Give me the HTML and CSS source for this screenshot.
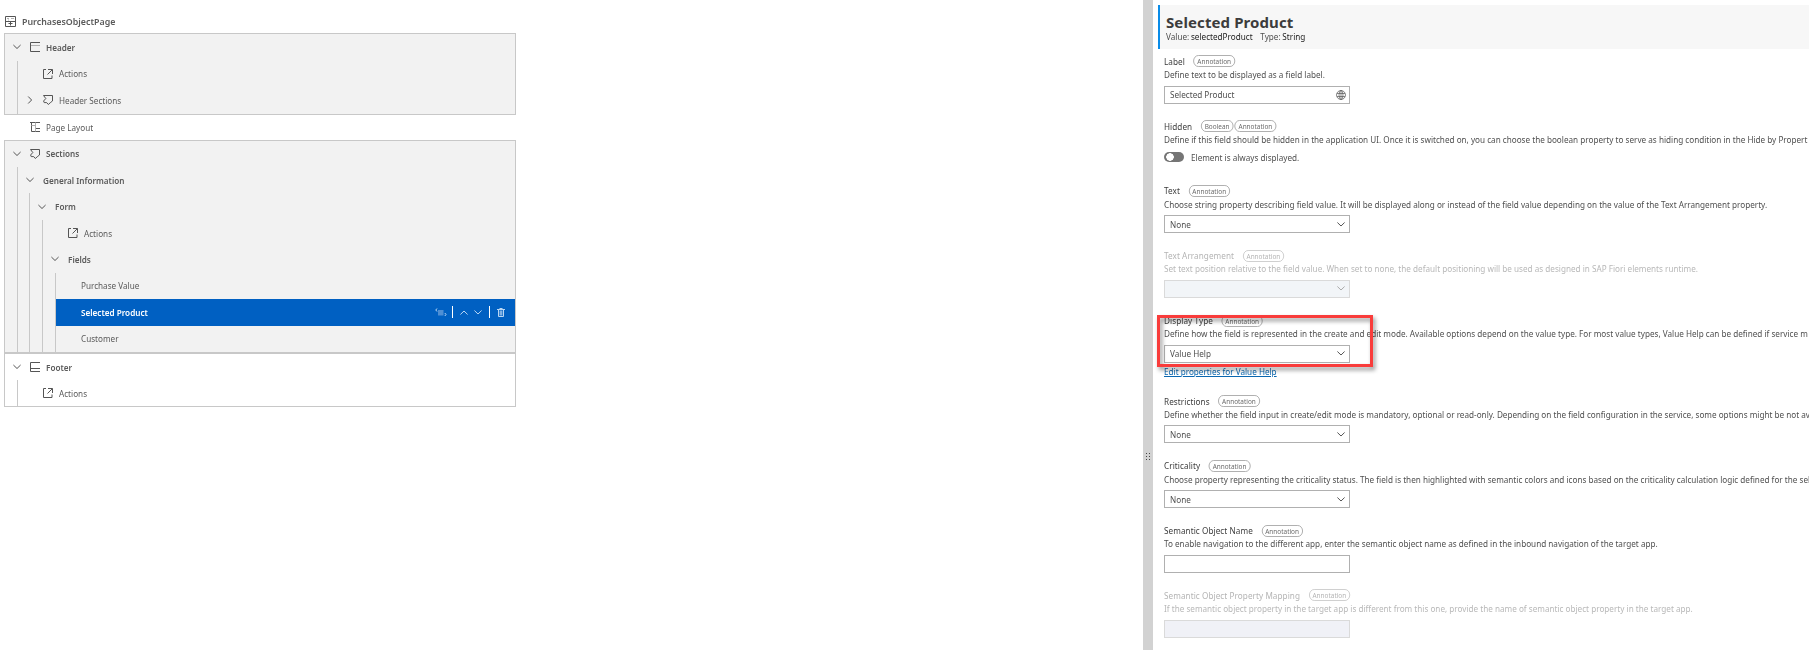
FILE: index.html
```html
<!DOCTYPE html>
<html lang="en">
<head>
<meta charset="utf-8">
<title>PurchasesObjectPage</title>
<link rel="stylesheet" href="styles.css">
</head>
<body>
<svg class="defs" aria-hidden="true">
  <symbol id="down" viewBox="0 0 8 5"><path d="M.4.5 4 4 7.6.5"/></symbol>
  <symbol id="right" viewBox="0 0 5 8"><path d="M.7.5 4.1 4 .7 7.5"/></symbol>
  <symbol id="action" viewBox="0 0 10 10"><path d="M3 .5H.5v9h8.500V6.500M5 .5h4.500v4.500M9.300.7 4.500 5.500"/></symbol>
  <symbol id="section" viewBox="0 0 10 10"><path d="M.5.5h9v5.500L7.800 7.300 5.300 9.500 3.700 7.600H1.200L.6 6 2.800 3.500z"/></symbol>
  <symbol id="header" viewBox="0 0 10 10"><path d="M10 .5H.5v9H10"/><path class="faint" d="M1 3.500H10"/></symbol>
  <symbol id="footer" viewBox="0 0 10 10"><path d="M10 .5H.5v9H10M.5 6.500H10"/></symbol>
  <symbol id="layout" viewBox="0 0 10 10"><path d="M0 .5h10M1.500.5v9H10M5.500 6.500H10"/><path class="faint" d="M5.500.5v9M1.500 3.500h4"/></symbol>
</svg>
<div class="app">
  <main class="outline">
    <div class="page-title">
      <svg class="page-icon" viewBox="0 0 11 11"><path d="M.5.5h10v10H.5zM.5 5.500h10M5.500 5.500v4M3.500 7.500h4"/><path class="faint" d="M2 2.500h2M6 2.500h3M3 4h1"/></svg>
      <span>PurchasesObjectPage</span>
    </div>

    <section class="box shaded">
      <div class="row bold"><svg class="chev"><use href="#down"/></svg><svg class="icon"><use href="#header"/></svg><span>Header</span></div>
      <div class="children">
        <div class="row"><i class="chev"></i><svg class="icon"><use href="#action"/></svg><span>Actions</span></div>
        <div class="row"><svg class="chev"><use href="#right"/></svg><svg class="icon"><use href="#section"/></svg><span>Header Sections</span></div>
      </div>
    </section>

    <div class="row single"><i class="chev"></i><svg class="icon"><use href="#layout"/></svg><span>Page Layout</span></div>

    <section class="box shaded">
      <div class="row bold"><svg class="chev"><use href="#down"/></svg><svg class="icon"><use href="#section"/></svg><span>Sections</span></div>
      <div class="children">
        <div class="row bold"><svg class="chev"><use href="#down"/></svg><span>General Information</span></div>
        <div class="children">
          <div class="row bold"><svg class="chev"><use href="#down"/></svg><span>Form</span></div>
          <div class="children">
            <div class="row"><i class="chev"></i><svg class="icon"><use href="#action"/></svg><span>Actions</span></div>
            <div class="row bold"><svg class="chev"><use href="#down"/></svg><span>Fields</span></div>
            <div class="children">
              <div class="row"><i class="chev"></i><span>Purchase Value</span></div>
              <div class="row bold selected"><i class="chev"></i><span>Selected Product</span>
                <div class="tools">
                  <svg class="move" viewBox="0 0 12 9"><path d="M2 .5.8 2 2 3.500M9.800 5l1.200 1.500L9.800 8"/><path class="fill" d="M3 2h5.500v5.500H3z"/></svg>
                  <i class="bar"></i>
                  <svg class="up" viewBox="0 0 8 5"><path d="M.4 4.500 4 1l3.600 3.500"/></svg>
                  <svg class="dn" viewBox="0 0 8 5"><path d="M.4.5 4 4 7.600.5"/></svg>
                  <i class="bar"></i>
                  <svg class="trash" viewBox="0 0 8 9"><path d="M0 1.500h8M2.500.5h3M1.500 2v6.500h5V2M3.200 2.500v5M4.800 2.500v5"/></svg>
                </div>
              </div>
              <div class="row"><i class="chev"></i><span>Customer</span></div>
            </div>
          </div>
        </div>
      </div>
    </section>

    <section class="box last">
      <div class="row bold"><svg class="chev"><use href="#down"/></svg><svg class="icon"><use href="#footer"/></svg><span>Footer</span></div>
      <div class="children">
        <div class="row"><i class="chev"></i><svg class="icon"><use href="#action"/></svg><span>Actions</span></div>
      </div>
    </section>
  </main>

  <div class="splitter"><div class="grip"><i></i><i></i><i></i><i></i><i></i><i></i></div></div>

  <aside class="panel">
    <header class="panel-head">
      <h1>Selected Product</h1>
      <p><span>Value:</span><b>selectedProduct</b><span class="type">Type:</span><b>String</b></p>
    </header>
    <div class="fields">
      <div class="field">
        <div class="label"><span>Label</span><em>Annotation</em></div>
        <p class="desc">Define text to be displayed as a field label.</p>
        <div class="control"><span>Selected Product</span><svg class="globe" viewBox="0 0 10 10"><circle cx="5" cy="5" r="4.500"/><ellipse cx="5" cy="5" rx="2" ry="4.500"/><path d="M5 .5v9M1 3.500h8M1 6.500h8"/></svg></div>
      </div>
      <div class="field">
        <div class="label"><span>Hidden</span><em>Boolean</em><em>Annotation</em></div>
        <p class="desc">Define if this field should be hidden in the application UI. Once it is switched on, you can choose the boolean property to serve as hiding condition in the Hide by Propert</p>
        <div class="switch-row"><i class="switch"></i><span>Element is always displayed.</span></div>
      </div>
      <div class="field">
        <div class="label"><span>Text</span><em>Annotation</em></div>
        <p class="desc">Choose string property describing field value. It will be displayed along or instead of the field value depending on the value of the Text Arrangement property.</p>
        <div class="control"><span>None</span><svg class="chev"><use href="#down"/></svg></div>
      </div>
      <div class="field disabled">
        <div class="label"><span>Text Arrangement</span><em>Annotation</em></div>
        <p class="desc">Set text position relative to the field value. When set to none, the default positioning will be used as designed in SAP Fiori elements runtime.</p>
        <div class="control"><span></span><svg class="chev"><use href="#down"/></svg></div>
      </div>
      <div class="field linked">
        <div class="label"><span>Display Type</span><em>Annotation</em></div>
        <p class="desc">Define how the field is represented in the create and edit mode. Available options depend on the value type. For most value types, Value Help can be defined if service m</p>
        <div class="control"><span>Value Help</span><svg class="chev"><use href="#down"/></svg></div>
        <a class="link" href="#">Edit properties for Value Help</a>
        <div class="highlight"></div>
      </div>
      <div class="field">
        <div class="label"><span>Restrictions</span><em>Annotation</em></div>
        <p class="desc">Define whether the field input in create/edit mode is mandatory, optional or read-only. Depending on the field configuration in the service, some options might be not av</p>
        <div class="control"><span>None</span><svg class="chev"><use href="#down"/></svg></div>
      </div>
      <div class="field">
        <div class="label"><span>Criticality</span><em>Annotation</em></div>
        <p class="desc">Choose property representing the criticality status. The field is then highlighted with semantic colors and icons based on the criticality calculation logic defined for the sel</p>
        <div class="control"><span>None</span><svg class="chev"><use href="#down"/></svg></div>
      </div>
      <div class="field">
        <div class="label"><span>Semantic Object Name</span><em>Annotation</em></div>
        <p class="desc">To enable navigation to the different app, enter the semantic object name as defined in the inbound navigation of the target app.</p>
        <div class="control"></div>
      </div>
      <div class="field disabled mapping">
        <div class="label"><span>Semantic Object Property Mapping</span><em>Annotation</em></div>
        <p class="desc">If the semantic object property in the target app is different from this one, provide the name of semantic object property in the target app.</p>
        <div class="control"></div>
      </div>
    </div>
  </aside>
</div>
</body>
</html>
```
FILE: styles.css
```css
* { box-sizing: border-box; }
html, body { height: 650px; overflow: hidden; }
body {
  margin: 0;
  background: #fff;
  color: #5a5a5a;
  font-family: "Noto Sans", "Open Sans", sans-serif;
  font-size: 9.5px;
}
h1, p { margin: 0; }
svg { fill: none; stroke: #555; stroke-width: 1; flex: none; }
.faint { stroke: #b0b0b0; }
.defs { position: absolute; width: 0; height: 0; }
.app { display: flex; width: 1809px; height: 650px; overflow: hidden; white-space: nowrap; }

/* condensed text */
.row span, .label, .desc, .control span, .switch-row span, .link, .panel-head p {
  transform: scaleX(.858);
  transform-origin: left center;
}

.outline { width: 1143px; flex: none; padding: 9px 0 0 4px; }
.page-title { display: flex; align-items: center; gap: 5.5px; height: 24px; padding-left: 1px; font-weight: 600; }
.page-title span { transform: scaleX(.93); transform-origin: left center; }
.page-icon { width: 11px; height: 11px; }
.box { width: 512px; border: 1px solid #c8c8c8; }
.shaded { background: #f2f2f2; }
.row { display: flex; align-items: center; height: 26.5px; padding-left: 8px; }
.row .chev { width: 8px; height: 8px; margin-right: 9px; flex: none; }
.icon { width: 10px; height: 10px; margin-right: 6px; }
.single { padding-left: 9px; height: 25.5px; }
.shaded ~ .shaded { margin-top: -0.5px; }
.shaded ~ .shaded .row { height: 26.45px; }
.last .row { height: 26px; }
.bold { font-weight: 600; }
.children { margin-left: 11.7px; border-left: 1px solid #c8c8c8; }
.selected { background: #0060c2; color: #fff; }
.selected svg { stroke: #b9d6f3; }
.tools { display: flex; align-items: center; margin-left: auto; padding-right: 10px; }
.move { width: 12px; height: 9px; }
.move .fill { fill: #4f8fd4; stroke: none; }
.bar { width: 1px; height: 12px; background: #fff; margin: 0 7px 0 5px; }
.up, .dn { width: 8px; height: 5px; }
.dn { margin-left: 6px; }
.trash { width: 8px; height: 9px; }
.dn + .bar { margin-left: 7px; }

.splitter { width: 10px; flex: none; background: #d2d2d2; }
.grip { display: grid; grid-template-columns: 1px 1px; gap: 2px; width: 4px; margin: 453px 0 0 3px; }
.grip i { width: 1px; height: 1px; background: #444; }

.panel { flex: 1; min-width: 0; padding: 5px 0 0 5px; color: #4f4f4f; }
.panel-head { height: 44px; border-left: 2px solid #0a8ce8; background: #f7f7f7; padding: 8px 0 0 6px; }
.panel-head h1 { font-size: 15px; line-height: 18px; letter-spacing: .1px; color: #3c3c3c; }
.panel-head p { line-height: 12px; }
.panel-head b { margin-left: 2px; font-weight: 400; color: #222; }
.type { margin-left: 9px; }
.fields { padding: 5.6px 0 0 6px; }
.field { position: relative; height: 64.8px; }
.linked { height: 80.5px; }
.label { display: flex; align-items: center; width: max-content; height: 13.5px; color: #3c3c3c; }
.label span { margin-right: 10px; letter-spacing: .08px; }
.label em {
  height: 12px; padding: 0 3.5px; margin-right: 1.5px;
  border: 1px solid #aaa; border-radius: 6px;
  font-size: 7.5px; line-height: 10px; font-style: normal; color: #6a6a6a;
}
.desc { width: max-content; line-height: 13.5px; }
.control {
  display: flex; align-items: center; justify-content: space-between;
  width: 186px; height: 18px; margin-top: 4px; padding: 0 4px 0 5px;
  border: 1px solid #b0b0b0; background: #fff;
}
.control .chev { width: 8px; height: 5px; }
.globe { width: 10px; height: 10px; margin-right: -1px; stroke-width: .7; }
.disabled { color: #b8b8b8; }
.disabled .label, .disabled em { color: #b4b4b4; }
.disabled em { border-color: #ccc; }
.disabled .control { background: #f2f5f8; border-color: #dadada; }
.disabled svg { stroke: #aaa; }
.mapping .control { background: #f0f1f7; }
.switch-row { display: flex; align-items: center; gap: 6.5px; margin-top: 4px; height: 14px; }
.switch { width: 20px; height: 10px; border-radius: 5px; background: radial-gradient(circle at 6px 5px, #fff 3.5px, #757575 4px); }
.link { display: block; width: max-content; margin-top: 2.5px; line-height: 14px; color: #0a67b0; text-decoration: underline; }
.highlight {
  position: absolute; left: -7px; top: 1px; width: 216px; height: 52px;
  border: 3px solid #f93c3b;
  filter: drop-shadow(2px 3px 2px rgba(0, 0, 0, .45));
}
```
